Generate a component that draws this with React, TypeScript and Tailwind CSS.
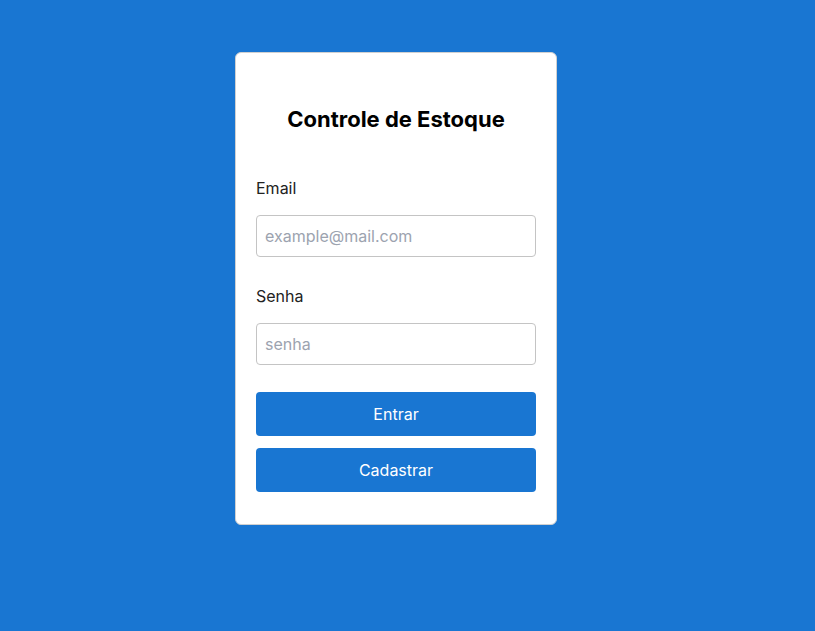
export default function App() {
  return (
    <div className="min-h-screen w-full bg-[#1976d2] font-['Inter',sans-serif]">
      <div className="flex justify-center pt-[52px] pr-[23px]">
        <form className="flex w-[322px] flex-col rounded-md border border-[#d0d0d0] bg-white px-5 pt-[52px] pb-[32px]">
          <h1 className="text-center text-[22px] leading-7 font-bold text-black">Controle de Estoque</h1>

          <label className="mt-[43px] text-base leading-6 text-[#222]">Email</label>
          <input
            type="email"
            placeholder="example@mail.com"
            className="mt-[15px] h-[42px] w-full rounded border border-[#c4c4c4] px-2 text-base text-[#222] placeholder:text-[#9ca3af] outline-none"
          />

          <label className="mt-[27px] text-base leading-6 text-[#222]">Senha</label>
          <input
            type="password"
            placeholder="senha"
            className="mt-[15px] h-[42px] w-full rounded border border-[#c4c4c4] px-2 text-base text-[#222] placeholder:text-[#9ca3af] outline-none"
          />

          <button
            type="button"
            className="mt-[27px] h-11 w-full rounded bg-[#1976d2] text-base text-white"
          >
            Entrar
          </button>
          <button
            type="button"
            className="mt-3 h-11 w-full rounded bg-[#1976d2] text-base text-white"
          >
            Cadastrar
          </button>
        </form>
      </div>
    </div>
  );
}
